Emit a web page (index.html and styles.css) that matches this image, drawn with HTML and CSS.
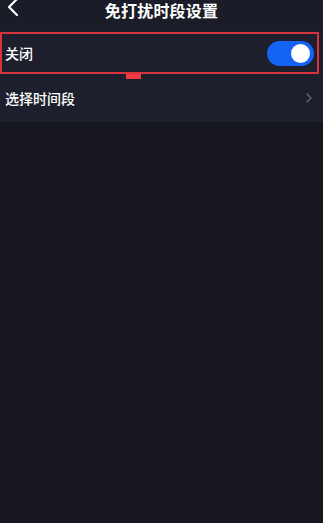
FILE: index.html
```html
<!DOCTYPE html>
<html>
    <head>
        <title>免打扰时段设置</title>
        <link rel="stylesheet" href="styles.css">
    </head>
    <body>
        <div class="header">
            <svg class="back" width="14" height="20" viewBox="0 0 14 20">
                <path d="M11 1 L3 9 L11 17" fill="none" stroke="#fff" stroke-width="2.2" stroke-linecap="round" stroke-linejoin="round"/>
            </svg>
            <div class="title">免打扰时段设置</div>
        </div>
        <div class="section">
            <div class="row row-switch">
                <span class="label">关闭</span>
                <div class="switch"><div class="knob"></div></div>
                <div class="mark"></div>
            </div>
            <div class="row row-time">
                <span class="label">选择时间段</span>
                <svg class="arrow" width="8" height="12" viewBox="0 0 8 12">
                    <path d="M2 2 L6 6 L2 10" fill="none" stroke="#5d6170" stroke-width="1.6" stroke-linecap="round" stroke-linejoin="round"/>
                </svg>
            </div>
        </div>
    </body>
</html>
```

FILE: styles.css
```css
body {
    margin: 0;
    background: #15161e;
    font-family: "Noto Sans CJK SC", "Noto Sans", sans-serif;
    color: #fff;
}
.header {
    height: 30px;
    padding-top: 1px;
    background: #1a1c27;
    display: flex;
    align-items: flex-start;
    justify-content: center;
    position: relative;
}
.back {
    position: absolute;
    left: 6px;
    top: -2px;
}
.title {
    font-size: 16px;
    font-weight: bold;
    line-height: 18px;
    letter-spacing: 0.2px;
}
.section {
    background: #1d202c;
    padding-top: 1px;
}
.row {
    display: flex;
    align-items: center;
    justify-content: space-between;
    padding: 0 5px;
    font-size: 14px;
}
.label {
    font-weight: 500;
}
.row-switch {
    position: relative;
    height: 38px;
    margin-right: 4px;
    border: 2px solid #d8333d;
    padding: 0 3px 0 3px;
}
.switch {
    width: 47px;
    height: 25px;
    border-radius: 13px;
    background: #1463f5;
    display: flex;
    align-items: center;
    justify-content: flex-end;
    padding-right: 4px;
    box-sizing: border-box;
}
.knob {
    width: 19px;
    height: 19px;
    border-radius: 50%;
    background: #fff;
}
.mark {
    position: absolute;
    left: 124px;
    bottom: -7px;
    width: 15px;
    height: 5px;
    background: #ef3a42;
}
.row-time {
    height: 48px;
    padding-right: 10px;
}
```
